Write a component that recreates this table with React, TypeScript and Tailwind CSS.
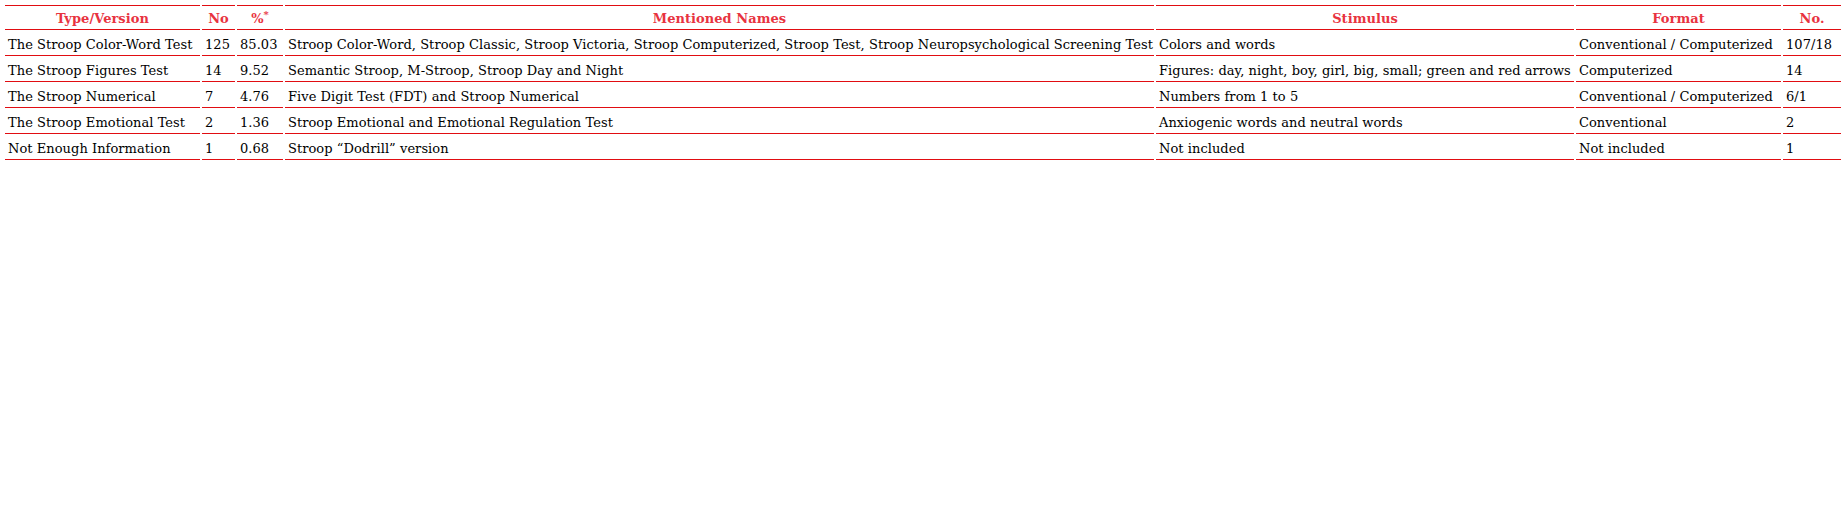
import React from 'react';

type Row = {
  type: string;
  no: string;
  pct: string;
  names: string;
  stimulus: string;
  format: string;
  count: string;
};

const rows: Row[] = [
  {
    type: 'The Stroop Color-Word Test',
    no: '125',
    pct: '85.03',
    names:
      'Stroop Color-Word, Stroop Classic, Stroop Victoria, Stroop Computerized, Stroop Test, Stroop Neuropsychological Screening Test',
    stimulus: 'Colors and words',
    format: 'Conventional / Computerized',
    count: '107/18',
  },
  {
    type: 'The Stroop Figures Test',
    no: '14',
    pct: '9.52',
    names: 'Semantic Stroop, M-Stroop, Stroop Day and Night',
    stimulus: 'Figures: day, night, boy, girl, big, small; green and red arrows',
    format: 'Computerized',
    count: '14',
  },
  {
    type: 'The Stroop Numerical',
    no: '7',
    pct: '4.76',
    names: 'Five Digit Test (FDT) and Stroop Numerical',
    stimulus: 'Numbers from 1 to 5',
    format: 'Conventional / Computerized',
    count: '6/1',
  },
  {
    type: 'The Stroop Emotional Test',
    no: '2',
    pct: '1.36',
    names: 'Stroop Emotional and Emotional Regulation Test',
    stimulus: 'Anxiogenic words and neutral words',
    format: 'Conventional',
    count: '2',
  },
  {
    type: 'Not Enough Information',
    no: '1',
    pct: '0.68',
    names: 'Stroop \u201cDodrill\u201d version',
    stimulus: 'Not included',
    format: 'Not included',
    count: '1',
  },
];

const th =
  'h-[25px] border-y border-[#e10d12] px-[3px] pt-[1px] text-center align-middle font-bold text-[#e8333f] leading-none';
const td =
  'h-[26px] border-b border-[#e10d12] px-[3px] pt-[3px] align-middle whitespace-nowrap leading-none';

export default function App() {
  return (
    <div className="min-h-screen bg-white pl-[3px] pt-[5px]">
      <table className="table-fixed border-separate border-spacing-x-[2px] border-spacing-y-0 w-[1840px] font-['DejaVu_Serif',serif] text-[13px] tracking-[0.05px] text-black">
        <colgroup>
          <col className="w-[195px]" />
          <col className="w-[33px]" />
          <col className="w-[46px]" />
          <col className="w-[869px]" />
          <col className="w-[418px]" />
          <col className="w-[205px]" />
          <col className="w-[58px]" />
        </colgroup>
        <thead>
          <tr>
            <th className={th}>Type/Version</th>
            <th className={th}>No</th>
            <th className={th}>
              %<sup className="text-[10px]">*</sup>
            </th>
            <th className={th}>Mentioned Names</th>
            <th className={th}>Stimulus</th>
            <th className={th}>Format</th>
            <th className={th}>No.</th>
          </tr>
        </thead>
        <tbody>
          {rows.map((r) => (
            <tr key={r.type}>
              <td className={td}>{r.type}</td>
              <td className={td}>{r.no}</td>
              <td className={td}>{r.pct}</td>
              <td className={td}>{r.names}</td>
              <td className={td}>{r.stimulus}</td>
              <td className={td}>{r.format}</td>
              <td className={td}>{r.count}</td>
            </tr>
          ))}
        </tbody>
      </table>
    </div>
  );
}
